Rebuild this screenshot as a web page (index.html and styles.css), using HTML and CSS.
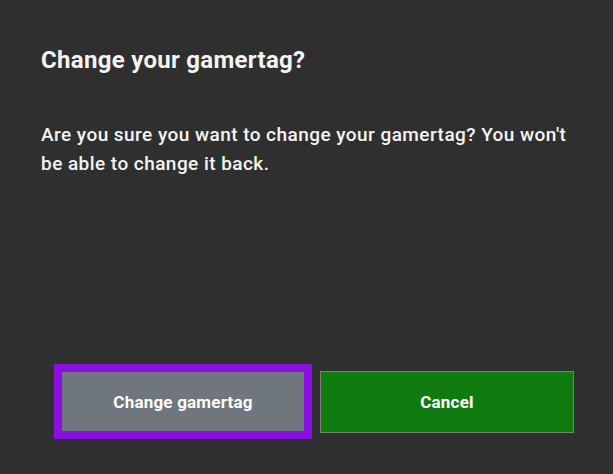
FILE: index.html
```html
<!DOCTYPE html>
<html lang="en">
<head>
  <meta charset="UTF-8">
  <title>Change your gamertag?</title>
  <link rel="stylesheet" href="styles.css">
</head>
<body>
  <div class="dialog">
    <div class="dialog-text">
      <h1 class="title">Change your gamertag?</h1>
      <p class="message">Are you sure you want to change your gamertag? You won't be able to change it back.</p>
    </div>

    <div class="dialog-buttons">
      <div class="dialog-button focused">Change gamertag</div>
      <div class="dialog-button primary">Cancel</div>
    </div>
  </div>
</body>
</html>
```

FILE: styles.css
```css
body {
  margin: 0;
  height: 100vh;
  background-color: #2f2f2f;
  color: #f4f4f4;
  font-family: Roboto, "Noto Sans", sans-serif;
}

.dialog {
  display: flex;
  flex-direction: column;
  height: 100%;
}

.dialog-text {
  flex-grow: 1;
  padding: 44px 41px 0 41px;
}

.title {
  margin: 0;
  font-size: 24px;
  line-height: 32px;
  font-weight: 700;
  letter-spacing: 0.3px;
}

.message {
  margin: 44px 0 0 0;
  font-size: 19px;
  line-height: 29px;
  font-weight: 500;
  letter-spacing: 0.45px;
}

.dialog-buttons {
  display: flex;
  align-items: center;
  gap: 8px;
  padding: 0 0 35px 54px;
}

.dialog-button {
  box-sizing: border-box;
  width: 254px;
  height: 62px;
  display: flex;
  align-items: center;
  justify-content: center;
  font-size: 17px;
  font-weight: 700;
  letter-spacing: 0.2px;
  color: #fff;
}

.dialog-button.focused {
  width: 258px;
  height: 75px;
  border: 8px solid #8a10e2;
  background-color: #6f767d;
}

.dialog-button.primary {
  border: 1px solid #7c7c7c;
  background-color: #107c10;
}
```
